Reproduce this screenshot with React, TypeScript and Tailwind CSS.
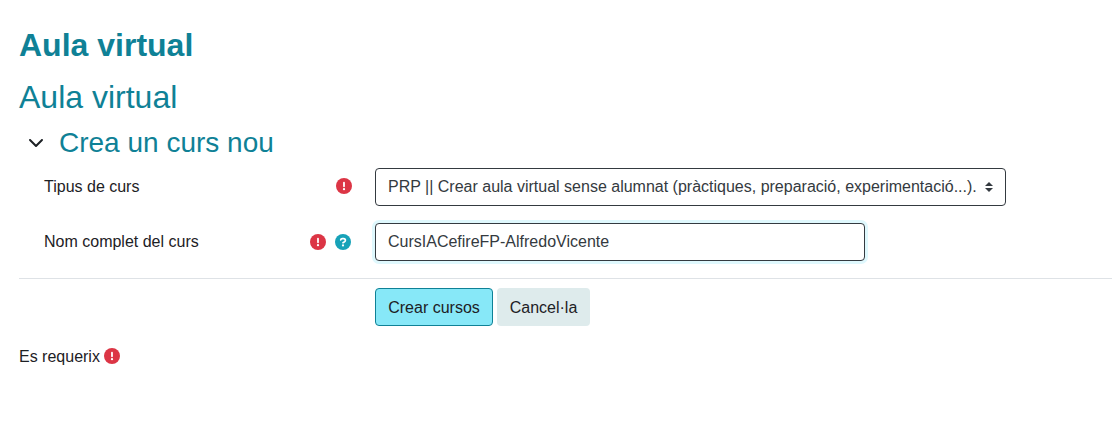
import { FaChevronDown } from "react-icons/fa6";

function Required() {
  return (
    <svg viewBox="0 0 16 16" className="size-4 shrink-0" aria-label="Requerit">
      <circle cx="8" cy="8" r="8" fill="#dc3545" />
      <path d="M8 4.7v3.6" stroke="#fff" strokeWidth="1.8" strokeLinecap="round" />
      <circle cx="8" cy="11.2" r="1.15" fill="#fff" />
    </svg>
  );
}

function Help() {
  return (
    <svg viewBox="0 0 16 16" className="size-4 shrink-0" fill="none" aria-hidden="true">
      <circle cx="8" cy="8" r="8" fill="#17a2b8" />
      <path
        d="M5.7 5.9C5.8 5 6.5 4.6 7.3 4.6h1.3c1 0 1.8.7 1.8 1.7 0 .7-.3 1.1-.9 1.5L8 8.7"
        stroke="#fff"
        strokeWidth="1.7"
        strokeLinecap="round"
        strokeLinejoin="round"
      />
      <circle cx="8" cy="11.4" r="1.1" fill="#fff" />
    </svg>
  );
}

function SelectArrows() {
  return (
    <svg viewBox="0 0 4 5" className="h-[10px] w-2 shrink-0" fill="#343a40" aria-hidden="true">
      <path d="M2 0L0 2h4zm0 5L0 3h4z" />
    </svg>
  );
}

export default function App() {
  return (
    <main className="flex h-[430px] flex-col overflow-hidden bg-white pl-[19px] font-['Liberation_Sans',Arial,sans-serif] text-base leading-6 text-[#1d2125]">
      <h1 className="mt-[26px] h-[38px] text-[32px] leading-[38px] font-bold text-[#0f8196]">Aula virtual</h1>
      <h2 className="mt-[14px] h-[38px] text-[32px] leading-[38px] text-[#0f8196]">Aula virtual</h2>

      <div className="mt-[10px] flex h-[34px] items-center">
        <FaChevronDown className="mb-[2px] ml-[9px] size-4" />
        <h3 className="ml-[15px] text-[28px] leading-[34px] text-[#0f8196]">Crea un curs nou</h3>
      </div>

      <div className="mt-2 flex h-[38px] items-center pl-[25px]">
        <div className="flex w-[308px] items-start justify-between">
          <label>Tipus de curs</label>
          <span className="pt-[3px]">
            <Required />
          </span>
        </div>
        <div className="ml-[23px] flex h-[38px] w-[631px] items-center justify-between rounded border border-[#343a40] bg-white px-3 whitespace-nowrap text-[#343a40]">
          <span>PRP || Crear aula virtual sense alumnat (pràctiques, preparació, experimentació...).</span>
          <SelectArrows />
        </div>
      </div>

      <div className="mt-[17px] flex h-[38px] items-center pl-[25px]">
        <div className="flex w-[307px] items-center justify-between">
          <label>Nom complet del curs</label>
          <span className="flex items-center gap-[9px]">
            <Required />
            <Help />
          </span>
        </div>
        <div className="ml-6 flex h-[38px] w-[490px] items-center rounded border border-[#343a40] bg-white px-3 text-[#343a40] shadow-[0_0_0_3px_#dff8fd]">
          CursIACefireFP-AlfredoVicente
        </div>
      </div>

      <hr className="mt-[17px] border-t border-[#dee2e6]" />

      <div className="mt-[9px] flex gap-1 pl-[356px]">
        <button className="h-[38px] w-[118px] rounded border border-[#0f8196] bg-[#87e8f8] pt-[2px] whitespace-nowrap">Crear cursos</button>
        <button className="h-[38px] w-[93px] rounded bg-[#deebec] pt-[2px] whitespace-nowrap">Cancel·la</button>
      </div>

      <p className="mt-[19px] flex items-start gap-1">
        Es requerix
        <span className="pt-[3px]">
          <Required />
        </span>
      </p>
    </main>
  );
}
